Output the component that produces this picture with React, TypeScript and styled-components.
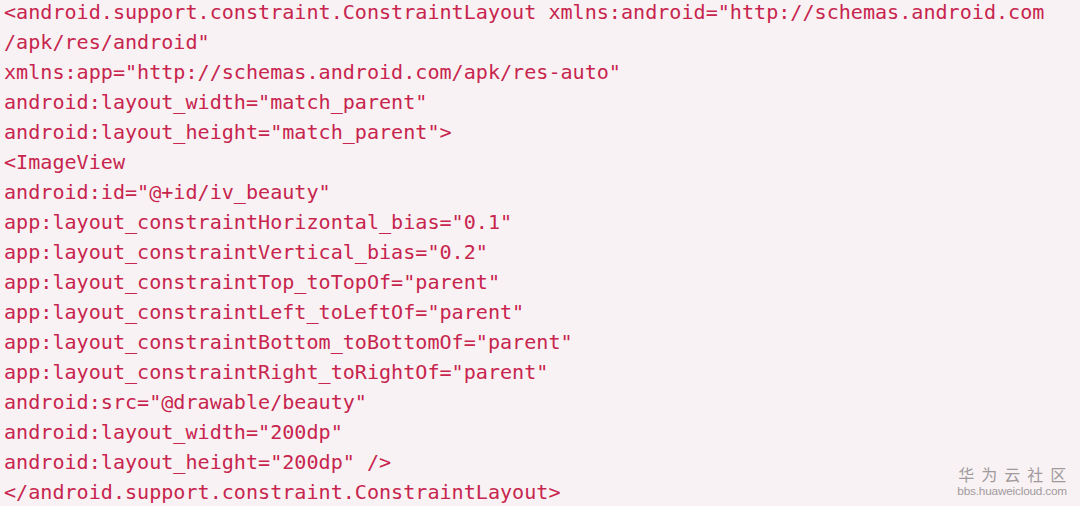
import React from "react";
import styled, { createGlobalStyle } from "styled-components";

const GlobalStyle = createGlobalStyle`
  html, body { margin: 0; padding: 0; background: #f9f2f4; }
`;

const Page = styled.div`
  position: relative;
  width: 1080px;
  height: 506px;
  background: #f9f2f4;
  overflow: hidden;
`;

const Code = styled.pre`
  margin: 0;
  padding: 0 0 0 4px;
  font-family: "DejaVu Sans Mono", "Liberation Mono", monospace;
  font-size: 20.1px;
  line-height: 30px;
  color: #c7254e;
  white-space: pre;
`;

const Line = styled.div`
  height: 30px;
  line-height: 30px;
  transform: translateY(-3px);
`;

const Watermark = styled.div`
  position: absolute;
  right: 13px;
  bottom: 8px;
  display: flex;
  flex-direction: column;
  align-items: center;
  color: #a09a9c;
  font-family: "Liberation Sans", Arial, sans-serif;
`;

const WmTitle = styled.div`
  font-family: "Noto Sans CJK SC", sans-serif;
  font-size: 16px;
  letter-spacing: 7px;
  margin-right: -7px;
  line-height: 20px;
`;

const WmUrl = styled.div`
  font-size: 11.8px;
  line-height: 14px;
  letter-spacing: -0.2px;
`;

const lines = [
  '<android.support.constraint.ConstraintLayout xmlns:android="http://schemas.android.com',
  '/apk/res/android"',
  'xmlns:app="http://schemas.android.com/apk/res-auto"',
  'android:layout_width="match_parent"',
  'android:layout_height="match_parent">',
  "<ImageView",
  'android:id="@+id/iv_beauty"',
  'app:layout_constraintHorizontal_bias="0.1"',
  'app:layout_constraintVertical_bias="0.2"',
  'app:layout_constraintTop_toTopOf="parent"',
  'app:layout_constraintLeft_toLeftOf="parent"',
  'app:layout_constraintBottom_toBottomOf="parent"',
  'app:layout_constraintRight_toRightOf="parent"',
  'android:src="@drawable/beauty"',
  'android:layout_width="200dp"',
  'android:layout_height="200dp" />',
  "</android.support.constraint.ConstraintLayout>",
];

export default function App() {
  return (
    <Page>
      <GlobalStyle />
      <Code>
        {lines.map((l, i) => (
          <Line key={i}>{l}</Line>
        ))}
      </Code>
      <Watermark>
        <WmTitle>华为云社区</WmTitle>
        <WmUrl>bbs.huaweicloud.com</WmUrl>
      </Watermark>
    </Page>
  );
}
